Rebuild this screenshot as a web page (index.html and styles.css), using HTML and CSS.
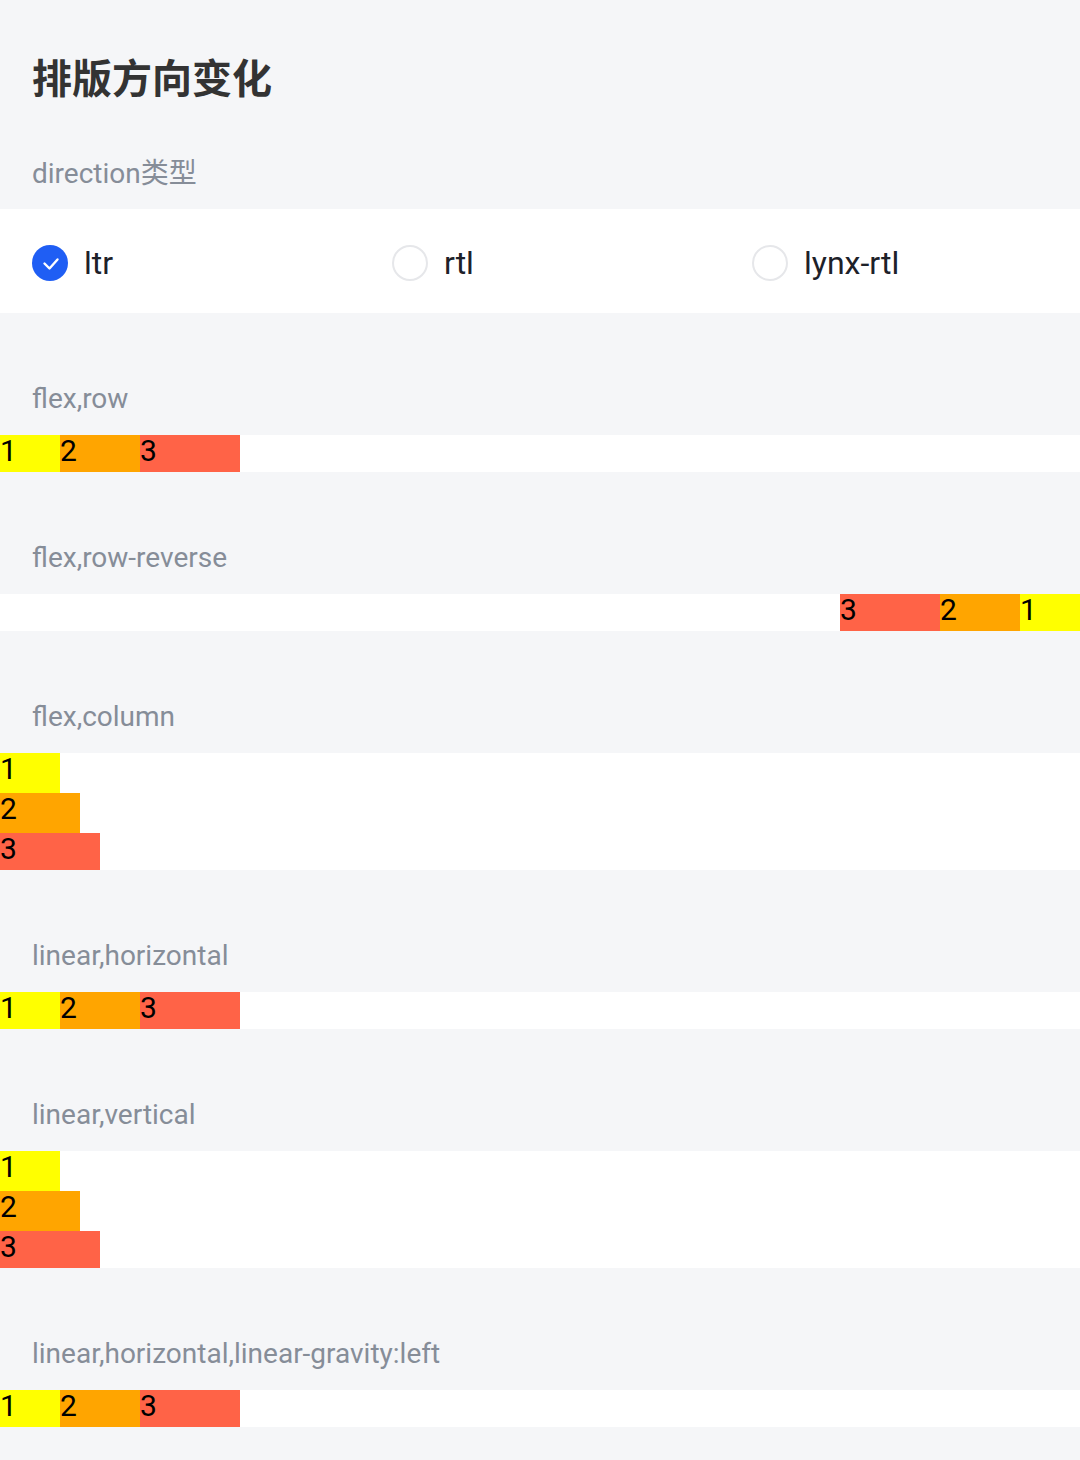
FILE: index.html
```html
<!DOCTYPE html>
<html lang="zh">
<head>
<meta charset="utf-8">
<title>排版方向变化</title>
<link rel="stylesheet" href="styles.css">
</head>
<body>
<div class="page">
  <h1 class="title">排版方向变化</h1>
  <div class="sub">direction类型</div>
  <div class="radios">
    <div class="radio">
      <span class="circle checked">
        <svg width="36" height="36" viewBox="0 0 36 36"><path d="M12.5 18.5 L17.5 23.5 L25.5 14.5" fill="none" stroke="#fff" stroke-width="2.4" stroke-linecap="round" stroke-linejoin="round"/></svg>
      </span>
      <span class="rtext">ltr</span>
    </div>
    <div class="radio">
      <span class="circle"></span>
      <span class="rtext">rtl</span>
    </div>
    <div class="radio">
      <span class="circle"></span>
      <span class="rtext">lynx-rtl</span>
    </div>
  </div>

  <div class="label">flex,row</div>
  <div class="bar row">
    <div class="item i1">1</div><div class="item i2">2</div><div class="item i3">3</div>
  </div>

  <div class="label">flex,row-reverse</div>
  <div class="bar row reverse">
    <div class="item i1">1</div><div class="item i2">2</div><div class="item i3">3</div>
  </div>

  <div class="label">flex,column</div>
  <div class="bar col">
    <div class="item i1">1</div><div class="item i2">2</div><div class="item i3 last">3</div>
  </div>

  <div class="label">linear,horizontal</div>
  <div class="bar row">
    <div class="item i1">1</div><div class="item i2">2</div><div class="item i3">3</div>
  </div>

  <div class="label">linear,vertical</div>
  <div class="bar col">
    <div class="item i1">1</div><div class="item i2">2</div><div class="item i3 last">3</div>
  </div>

  <div class="label">linear,horizontal,linear-gravity:left</div>
  <div class="bar row">
    <div class="item i1">1</div><div class="item i2">2</div><div class="item i3">3</div>
  </div>
</div>
</body>
</html>
```
FILE: styles.css
```css
html, body {
  margin: 0;
  padding: 0;
  background: #f5f6f8;
}
body {
  font-family: Roboto, "Noto Sans CJK SC", sans-serif;
  width: 1080px;
  height: 1460px;
  overflow: hidden;
}
.page {
  display: flex;
  flex-direction: column;
}
.title {
  margin: 0;
  padding: 54px 32px 0;
  font-size: 40px;
  line-height: 52px;
  font-weight: 700;
  color: #333333;
}
.sub {
  padding: 50px 32px 0;
  height: 36px;
  font-size: 28px;
  line-height: 36px;
  color: #868d98;
  margin-bottom: 17px;
}
.radios {
  background: #fff;
  height: 104px;
  box-sizing: border-box;
  padding-top: 4px;
  display: grid;
  grid-template-columns: 360px 360px 360px;
  align-items: center;
}
.radio {
  display: flex;
  align-items: center;
  padding-left: 32px;
}
.circle {
  width: 36px;
  height: 36px;
  box-sizing: border-box;
  border-radius: 50%;
  border: 2px solid #e6e7ea;
  display: flex;
}
.circle.checked {
  background: #1f5ef4;
  border: none;
}
.rtext {
  margin-left: 16px;
  font-size: 32px;
  line-height: 40px;
  color: #1d2129;
}
.label {
  padding: 67.5px 32px 18px;
  font-size: 28px;
  line-height: 36px;
  color: #868d98;
}
.bar {
  background: #fff;
  display: flex;
}
.bar.row {
  height: 37.5px;
}
.bar.reverse {
  flex-direction: row-reverse;
}
.bar.col {
  flex-direction: column;
  align-items: flex-start;
}
.item {
  font-size: 30px;
  line-height: 32px;
  color: #000;
  height: 37.5px;
}
.bar.col .item {
  height: 40px;
}
.bar.col .item.last {
  height: 37.5px;
}
.i1 { width: 60px; background: yellow; }
.i2 { width: 80px; background: orange; }
.i3 { width: 100px; background: tomato; }
```
